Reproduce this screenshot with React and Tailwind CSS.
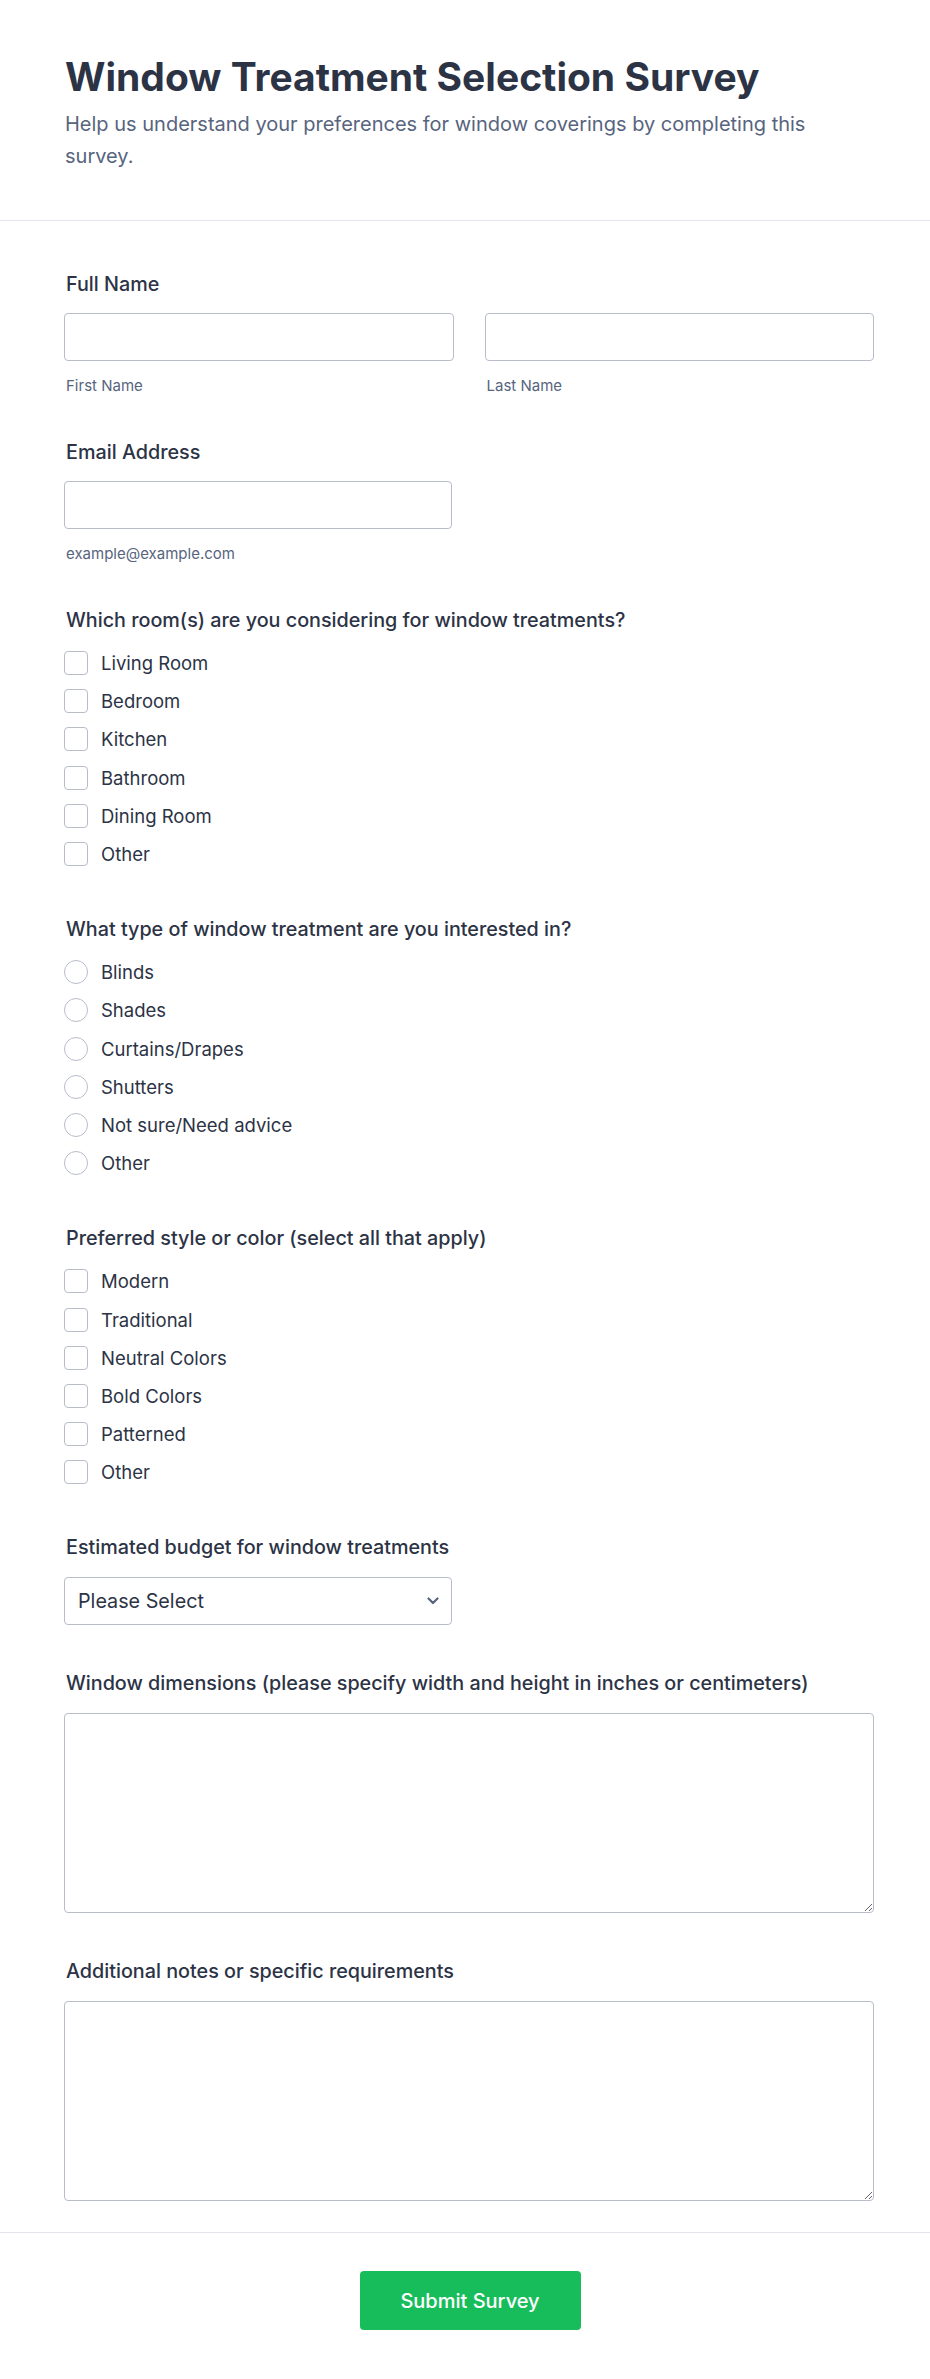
import { useState } from 'react';

const rooms = ['Living Room', 'Bedroom', 'Kitchen', 'Bathroom', 'Dining Room', 'Other'];
const treatments = ['Blinds', 'Shades', 'Curtains/Drapes', 'Shutters', 'Not sure/Need advice', 'Other'];
const styles = ['Modern', 'Traditional', 'Neutral Colors', 'Bold Colors', 'Patterned', 'Other'];

const inputCls =
  'block w-full h-[48px] border border-[#b8bdc9] rounded-[4px] bg-white px-[13px] text-[19.75px] text-[#2c3345] outline-none focus:border-[#2e69ff]';

const Label = ({ children, htmlFor }) => (
  <label htmlFor={htmlFor} className="block pl-[2px] text-[19.75px] leading-[24px] font-medium text-[#2c3345]">
    {children}
  </label>
);

const Sublabel = ({ children }) => (
  <span className="block mt-[15px] pl-[2px] text-[15px] leading-[20px] text-[#57647e]">{children}</span>
);

const OptionList = ({ name, items, type, value, onChange }) => (
  <div className="mt-[12px] flex flex-col">
    {items.map((item) => {
      const checked = type === 'radio' ? value === item : value.includes(item);
      return (
        <label key={item} className="flex items-center gap-[13px] h-[38.2px] cursor-pointer">
          <input
            type={type}
            name={name}
            checked={checked}
            onChange={() => onChange(item)}
            className={`appearance-none shrink-0 w-6 h-6 border border-[#b8bdc9] bg-white checked:bg-[#2e69ff] checked:border-[#2e69ff] ${
              type === 'radio' ? 'rounded-full' : 'rounded-[4px]'
            }`}
          />
          <span className="text-[18.5px] leading-[24px] text-[#2c3345]">{item}</span>
        </label>
      );
    })}
  </div>
);

export default function App() {
  const [form, setForm] = useState({
    first: '',
    last: '',
    email: '',
    rooms: [],
    treatment: '',
    styles: [],
    budget: '',
    dimensions: '',
    notes: ''
  });

  const toggle = (key) => (item) =>
    setForm((f) => ({
      ...f,
      [key]: f[key].includes(item) ? f[key].filter((x) => x !== item) : [...f[key], item]
    }));

  const handleSubmit = (e) => {
    e.preventDefault();
  };

  return (
    <div className="min-h-screen bg-white font-['Inter',sans-serif] text-[#2c3345]">
      {/* Header */}
      <div className="border-b border-[#e3e5ee] pt-[54px] pb-[48px]">
        <div className="ml-[64px] w-[810px] pl-[1px]">
          <h1 className="text-[39px] leading-[46px] font-bold text-[#2c3345]">
            Window Treatment Selection Survey
          </h1>
          <p className="mt-[9px] max-w-[790px] text-[20px] leading-[31.5px] text-[#57647e]">
            Help us understand your preferences for window coverings by completing this survey.
          </p>
        </div>
      </div>

      <form onSubmit={handleSubmit}>
        <div className="pt-[51px] pb-[31px]">
          <div className="ml-[64px] w-[810px] flex flex-col gap-[44px]">
            {/* Full name */}
            <div>
              <Label htmlFor="first">Full Name</Label>
              <div className="mt-[17px] grid grid-cols-2 gap-x-[31px]">
                <div>
                  <input
                    id="first"
                    className={inputCls}
                    value={form.first}
                    onChange={(e) => setForm({ ...form, first: e.target.value })}
                  />
                  <Sublabel>First Name</Sublabel>
                </div>
                <div>
                  <input
                    className={inputCls}
                    value={form.last}
                    onChange={(e) => setForm({ ...form, last: e.target.value })}
                  />
                  <Sublabel>Last Name</Sublabel>
                </div>
              </div>
            </div>

            {/* Email */}
            <div>
              <Label htmlFor="email">Email Address</Label>
              <div className="mt-[17px] w-[388px]">
                <input
                  id="email"
                  type="email"
                  className={inputCls}
                  value={form.email}
                  onChange={(e) => setForm({ ...form, email: e.target.value })}
                />
                <Sublabel>example@example.com</Sublabel>
              </div>
            </div>

            <div>
              <Label>Which room(s) are you considering for window treatments?</Label>
              <OptionList name="rooms" type="checkbox" items={rooms} value={form.rooms} onChange={toggle('rooms')} />
            </div>

            <div>
              <Label>What type of window treatment are you interested in?</Label>
              <OptionList
                name="treatment"
                type="radio"
                items={treatments}
                value={form.treatment}
                onChange={(item) => setForm({ ...form, treatment: item })}
              />
            </div>

            <div>
              <Label>Preferred style or color (select all that apply)</Label>
              <OptionList name="styles" type="checkbox" items={styles} value={form.styles} onChange={toggle('styles')} />
            </div>

            {/* Budget */}
            <div className="pb-[2px]">
              <Label htmlFor="budget">Estimated budget for window treatments</Label>
              <div className="relative mt-[18px] w-[388px]">
                <select
                  id="budget"
                  value={form.budget}
                  onChange={(e) => setForm({ ...form, budget: e.target.value })}
                  className={`${inputCls} appearance-none pr-[40px]`}
                >
                  <option value="">Please Select</option>
                  <option>Under $500</option>
                  <option>$500 - $1,000</option>
                  <option>$1,000 - $2,500</option>
                  <option>$2,500 - $5,000</option>
                  <option>Over $5,000</option>
                </select>
                <svg
                  className="pointer-events-none absolute right-[13px] top-1/2 -translate-y-1/2"
                  width="12"
                  height="8"
                  viewBox="0 0 12 8"
                  fill="none"
                >
                  <path d="M1.5 1.5L6 6L10.5 1.5" stroke="#57647e" strokeWidth="2.2" strokeLinecap="round" strokeLinejoin="round" />
                </svg>
              </div>
            </div>

            <div className="pb-[2px]">
              <Label htmlFor="dimensions">
                Window dimensions (please specify width and height in inches or centimeters)
              </Label>
              <textarea
                id="dimensions"
                className="mt-[18px] block w-full h-[200px] border border-[#b8bdc9] rounded-[4px] bg-white p-[13px] text-[18px] text-[#2c3345] outline-none focus:border-[#2e69ff]"
                value={form.dimensions}
                onChange={(e) => setForm({ ...form, dimensions: e.target.value })}
              />
            </div>

            <div>
              <Label htmlFor="notes">Additional notes or specific requirements</Label>
              <textarea
                id="notes"
                className="mt-[18px] block w-full h-[200px] border border-[#b8bdc9] rounded-[4px] bg-white p-[13px] text-[18px] text-[#2c3345] outline-none focus:border-[#2e69ff]"
                value={form.notes}
                onChange={(e) => setForm({ ...form, notes: e.target.value })}
              />
            </div>
          </div>
        </div>

        {/* Footer */}
        <div className="border-t border-[#e3e5ee] pt-[38px] pb-[46px]">
          <div className="ml-[65px] w-[810px] flex justify-center">
            <button
              type="submit"
              className="w-[221px] h-[59px] rounded-[4px] bg-[#18bd5b] text-white text-[20px] font-medium hover:bg-[#16aa52]"
            >
              Submit Survey
            </button>
          </div>
        </div>
      </form>
    </div>
  );
}
